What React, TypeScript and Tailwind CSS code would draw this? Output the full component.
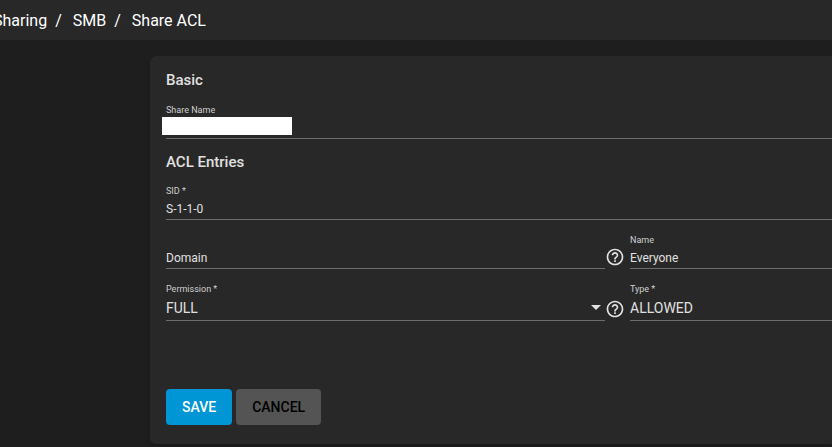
import type { ReactNode } from 'react';
import { MdHelpOutline } from 'react-icons/md';

interface TextFieldProps {
  id: string;
  label: string;
  value?: string;
  redacted?: boolean;
}

function TextField({ id, label, value = '', redacted }: TextFieldProps) {
  return (
    <div className="relative min-w-0 border-b border-[#6c6c6c]">
      <label htmlFor={id} className="block text-[9px] leading-[14px] text-[#cfcfcf]">
        {label}
      </label>
      <input
        id={id}
        type="text"
        defaultValue={value}
        className="block h-[21px] w-full bg-transparent text-xs outline-none"
      />
      {redacted && <span className="absolute top-3.5 -left-1 h-[18px] w-[130px] bg-white" />}
    </div>
  );
}

// Empty field, the label rests where the value would be
function EmptyField({ id, label }: { id: string; label: string }) {
  return (
    <div className="min-w-0 grow border-b border-[#6c6c6c] pt-3.5">
      <input
        id={id}
        type="text"
        aria-label={label}
        placeholder={label}
        className="block h-[21px] w-full bg-transparent text-xs outline-none placeholder:text-[#e0e0e0]"
      />
    </div>
  );
}

interface SelectFieldProps {
  id: string;
  label: string;
  options: string[];
  arrow?: boolean;
}

function SelectField({ id, label, options, arrow }: SelectFieldProps) {
  return (
    <div className="relative min-w-0 grow border-b border-[#6c6c6c]">
      <label htmlFor={id} className="block text-[9px] leading-[14px] text-[#cfcfcf]">
        {label}
      </label>
      <select id={id} className="block h-6 w-full appearance-none bg-transparent text-sm outline-none">
        {options.map((option) => (
          <option key={option}>{option}</option>
        ))}
      </select>
      {arrow && (
        <svg viewBox="0 0 10 5" className="pointer-events-none absolute right-1 bottom-2.5 h-[5px] w-2.5" fill="#e0e0e0">
          <path d="M0 0h10L5 5z" />
        </svg>
      )}
    </div>
  );
}

function WithHelp({ children }: { children: ReactNode }) {
  return (
    <div className="flex items-end pr-[5px]">
      {children}
      <button type="button" aria-label="Help" className="mb-0.5 shrink-0">
        <MdHelpOutline className="size-5" />
      </button>
    </div>
  );
}

export default function App() {
  return (
    <div className="min-h-screen overflow-hidden bg-[#1e1e1e] font-['Roboto',sans-serif] text-[#e0e0e0]">
      <header className="bg-[#282828]">
        <nav className="-ml-[7px] flex h-10 items-center pt-0.5 text-base text-white">
          <a href="#sharing">Sharing</a>
          <span className="mr-[11px] ml-2">/</span>
          <a href="#smb">SMB</a>
          <span className="mr-[11px] ml-2">/</span>
          <a href="#acl">Share ACL</a>
        </nav>
      </header>

      <main className="pt-4 pl-[150px]">
        <form className="rounded-l-md bg-[#282828] pt-3 pb-[19px] pl-4 shadow-md">
          <h2 className="mb-[11px] text-[15px] leading-6 font-medium">Basic</h2>
          <TextField id="share-name" label="Share Name" redacted />

          <h2 className="mt-[11px] mb-[10px] text-[15px] leading-6 font-medium">ACL Entries</h2>
          <TextField id="sid" label="SID *" value="S-1-1-0" />
          <div className="mt-[13px] grid grid-cols-[1fr_202px] gap-y-[13px]">
            <WithHelp>
              <EmptyField id="domain" label="Domain" />
            </WithHelp>
            <TextField id="name" label="Name" value="Everyone" />
            <WithHelp>
              <SelectField id="permission" label="Permission *" options={['FULL', 'CHANGE', 'READ']} arrow />
            </WithHelp>
            <SelectField id="type" label="Type *" options={['ALLOWED', 'DENIED']} />
          </div>

          <div className="mt-[68px] flex gap-1 text-sm font-medium">
            <button type="submit" className="h-9 rounded bg-[#0095d5] px-4 text-white">
              SAVE
            </button>
            <button type="button" className="h-9 rounded bg-[#545454] px-4 text-black">
              CANCEL
            </button>
          </div>
        </form>
      </main>
    </div>
  );
}
